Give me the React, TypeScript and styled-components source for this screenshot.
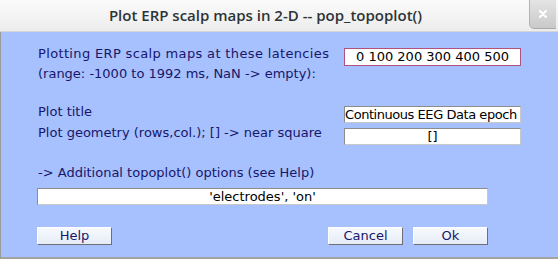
import React from 'react';
import styled, { createGlobalStyle } from 'styled-components';

const GlobalStyle = createGlobalStyle`
  html, body {
    margin: 0;
    padding: 0;
    background: #ffffff;
  }
`;

const Window = styled.div`
  width: 558px;
  height: 259px;
  display: flex;
  flex-direction: column;
  box-sizing: border-box;
  overflow: hidden;
`;

const TitleBar = styled.div`
  height: 32px;
  display: flex;
  align-items: flex-start;
  background: linear-gradient(#fbfbfb, #ececec);
  border-bottom: 1px solid #d6d6d6;
  box-sizing: border-box;
`;

const Title = styled.div`
  flex: 1;
  height: 31px;
  line-height: 31px;
  text-align: center;
  padding-left: 2px;
  font-family: 'Open Sans', 'DejaVu Sans', sans-serif;
  font-weight: 600;
  font-size: 15px;
  color: #2e3436;
`;

const CloseButton = styled.div`
  width: 27px;
  height: 29px;
  margin-right: 2px;
  display: flex;
  align-items: center;
  justify-content: center;
  background: linear-gradient(#e4e4e4, #c9c9c9);
  border-left: 1px solid #b4b4b4;
  border-bottom: 1px solid #a8a8a8;
  border-bottom-left-radius: 5px;
  box-sizing: border-box;
`;

const Body = styled.div`
  flex: 1;
  background: #a7c0fe;
  border-left: 1px solid #9a9a9a;
  border-bottom: 2px solid #a3a3a3;
  padding: 12px 37px 0 37px;
  display: flex;
  flex-direction: column;
  font-family: 'DejaVu Sans', sans-serif;
  font-size: 13px;
`;

const Row = styled.div<{ $top?: number }>`
  display: grid;
  grid-template-columns: 1fr 177px;
  column-gap: 8px;
  align-items: start;
  margin-top: ${(p) => p.$top ?? 0}px;
`;

const Label = styled.div<{ $wide?: boolean }>`
  color: #17176b;
  line-height: 20px;
  white-space: nowrap;
  letter-spacing: ${(p) => (p.$wide ? '0.35px' : '0')};
`;

const Field = styled.div<{ $align?: string; $focus?: boolean; $width?: number; $top?: number }>`
  height: ${(p) => (p.$focus ? 18 : 17)}px;
  width: ${(p) => (p.$width ? p.$width + 'px' : 'auto')};
  margin-top: ${(p) => p.$top ?? 0}px;
  box-sizing: border-box;
  background: #ffffff;
  border: 1px solid ${(p) => (p.$focus ? '#b0527e' : '#8c8c8c')};
  border-right-color: ${(p) => (p.$focus ? '#b0527e' : '#c8c8c8')};
  border-bottom-color: ${(p) => (p.$focus ? '#b0527e' : '#c8c8c8')};
  color: #000000;
  line-height: ${(p) => (p.$focus ? 16 : 15)}px;
  text-align: ${(p) => p.$align ?? 'center'};
  letter-spacing: ${(p) => (p.$align === 'left' ? '-0.45px' : '0')};
  padding: 0 ${(p) => (p.$align === 'left' ? 0 : 1)}px;
  white-space: nowrap;
  overflow: hidden;
`;

const Buttons = styled.div`
  display: flex;
  width: 451px;
  margin-top: 22px;
  margin-left: -1px;
`;

const Button = styled.div<{ $gap?: number }>`
  width: 75px;
  height: 18px;
  box-sizing: border-box;
  margin-left: ${(p) => p.$gap ?? 0}px;
  background: linear-gradient(#f6f9ff, #e6ecf6);
  border: 1px solid #ffffff;
  border-right-color: #6e6e78;
  border-bottom-color: #6e6e78;
  color: #17176b;
  text-align: center;
  line-height: 16px;
`;

const Spacer = styled.div`
  flex: 1;
`;

const CloseIcon = () => (
  <svg width="10" height="10" viewBox="0 0 10 10">
    <path d="M2 2 L8 8 M8 2 L2 8" stroke="#ffffff" strokeWidth="2.2" strokeLinecap="round" />
  </svg>
);

const App = () => {
  return (
    <Window>
      <GlobalStyle />
      <TitleBar>
        <Title>Plot ERP scalp maps in 2-D -- pop_topoplot()</Title>
        <CloseButton>
          <CloseIcon />
        </CloseButton>
      </TitleBar>
      <Body>
        <Row>
          <Label>
            <Label as="span" $wide>Plotting ERP scalp maps at these latencies</Label>
            <br />
            (range: -1000 to 1992 ms, NaN -&gt; empty):
          </Label>
          <Field $focus $top={4}>0 100 200 300 400 500</Field>
        </Row>
        <Row $top={18}>
          <Label>Plot title</Label>
          <Field $align="left" $top={4}>Continuous EEG Data epoch</Field>
        </Row>
        <Row $top={0}>
          <Label>Plot geometry (rows,col.); [] -&gt; near square</Label>
          <Field $top={5}>[]</Field>
        </Row>
        <Row $top={18}>
          <Label>-&gt; Additional topoplot() options (see Help)</Label>
        </Row>
        <Field $width={451} $top={5} style={{ marginLeft: -1 }}>
          'electrodes', 'on'
        </Field>
        <Buttons>
          <Button>Help</Button>
          <Spacer />
          <Button>Cancel</Button>
          <Button $gap={10}>Ok</Button>
        </Buttons>
      </Body>
    </Window>
  );
};

export default App;
